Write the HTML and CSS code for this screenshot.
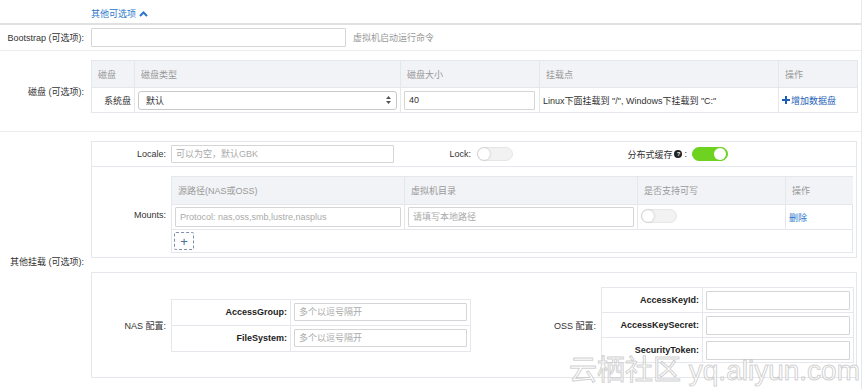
FILE: index.html
```html
<!DOCTYPE html>
<html lang="zh-CN">
<head>
    <title>其他可选项</title>
    <meta charset="UTF-8">
    <link rel="stylesheet" href="styles.css">
</head>
<body>
    <div class="page">
        <div class="toggle-row">
            <a class="more-link">其他可选项
                <svg class="chevron" width="9" height="6" viewBox="0 0 9 6"><path d="M1 5 L4.5 1.5 L8 5" fill="none" stroke="#2a76cc" stroke-width="2"/></svg>
            </a>
        </div>

        <div class="form-row row-bootstrap">
            <div class="row-label">Bootstrap (可选项):</div>
            <div class="row-body">
                <input type="text" class="text-input bootstrap-input">
                <span class="help">虚拟机启动运行命令</span>
            </div>
        </div>

        <div class="form-row row-disk">
            <div class="row-label">磁盘 (可选项):</div>
            <div class="row-body">
                <table class="grid disk-table">
                    <tr class="head">
                        <td class="c-disk">磁盘</td>
                        <td class="c-type">磁盘类型</td>
                        <td class="c-size">磁盘大小</td>
                        <td class="c-mount">挂载点</td>
                        <td class="c-op">操作</td>
                    </tr>
                    <tr>
                        <td class="c-disk disk-name">系统盘</td>
                        <td class="c-type">
                            <div class="select">默认
                                <svg class="sel-arrows" width="5" height="8" viewBox="0 0 5 8"><path d="M2.5 0 L5 3 L0 3 Z M2.5 8 L5 5 L0 5 Z" fill="#555"/></svg>
                            </div>
                        </td>
                        <td class="c-size"><input type="text" class="text-input size-input" value="40"></td>
                        <td class="c-mount mount-text">Linux下面挂载到 "/", Windows下挂载到 "C:"</td>
                        <td class="c-op">
                            <a class="add-link">
                                <svg width="8" height="8" viewBox="0 0 8 8"><rect x="3" y="0" width="2" height="8" fill="#1d5fb8"/><rect x="0" y="3" width="8" height="2" fill="#1d5fb8"/></svg>增加数据盘
                            </a>
                        </td>
                    </tr>
                </table>
            </div>
        </div>

        <div class="form-row row-mounts">
            <div class="row-label">其他挂载 (可选项):</div>
            <div class="row-body">
                <div class="panel">
                    <div class="sub-row locale-row">
                        <div class="sub-label">Locale:</div>
                        <input type="text" class="text-input locale-input" placeholder="可以为空，默认GBK">
                        <div class="lock-label">Lock:</div>
                        <span class="switch"></span>
                        <div class="cache-label">分布式缓存 <span class="q-icon">?</span>:</div>
                        <span class="switch on"></span>
                    </div>
                    <div class="sub-row mounts-row">
                        <div class="sub-label">Mounts:</div>
                        <div class="mounts-box">
                            <table class="grid mounts-table">
                                <tr class="head">
                                    <td class="m-src">源路径(NAS或OSS)</td>
                                    <td class="m-dir">虚拟机目录</td>
                                    <td class="m-rw">是否支持可写</td>
                                    <td class="m-op">操作</td>
                                </tr>
                                <tr>
                                    <td class="m-src"><input type="text" class="text-input cell-input" placeholder="Protocol: nas,oss,smb,lustre,nasplus"></td>
                                    <td class="m-dir"><input type="text" class="text-input cell-input" placeholder="请填写本地路径"></td>
                                    <td class="m-rw"><span class="switch"></span></td>
                                    <td class="m-op"><a class="del-link">删除</a></td>
                                </tr>
                            </table>
                            <div class="add-box">+</div>
                        </div>
                    </div>
                </div>

                <div class="panel config-panel">
                    <div class="config-group nas-group">
                        <div class="sub-label">NAS 配置:</div>
                        <table class="kv-table nas-table">
                            <tr>
                                <th>AccessGroup:</th>
                                <td><input type="text" class="text-input" placeholder="多个以逗号隔开"></td>
                            </tr>
                            <tr>
                                <th>FileSystem:</th>
                                <td><input type="text" class="text-input" placeholder="多个以逗号隔开"></td>
                            </tr>
                        </table>
                    </div>
                    <div class="config-group oss-group">
                        <div class="sub-label">OSS 配置:</div>
                        <table class="kv-table oss-table">
                            <tr>
                                <th>AccessKeyId:</th>
                                <td><input type="text" class="text-input"></td>
                            </tr>
                            <tr>
                                <th>AccessKeySecret:</th>
                                <td><input type="text" class="text-input"></td>
                            </tr>
                            <tr>
                                <th>SecurityToken:</th>
                                <td><input type="text" class="text-input"></td>
                            </tr>
                        </table>
                    </div>
                </div>
            </div>
        </div>

        <div class="watermark">云栖社区 yq.aliyun.com</div>
    </div>
</body>
</html>
```

FILE: styles.css
```css
body {
    margin: 0;
    background-color: white;
    font-family: "Liberation Sans", "Noto Sans CJK SC", sans-serif;
    font-size: 9px;
    color: #333;
}
.page {
    position: relative;
    width: 861px;
    min-height: 389px;
    border-right: 1px solid #e6e8ec;
}
.toggle-row {
    height: 23px;
    border-bottom: 2px solid #e0e0e0;
    padding-left: 91px;
    display: flex;
    align-items: center;
}
.more-link {
    color: #2a76cc;
    display: flex;
    align-items: center;
    gap: 3px;
    padding-top: 4px;
}
.form-row {
    display: flex;
    align-items: center;
    border-bottom: 1px solid #ececec;
}
.row-label {
    width: 84px;
    padding-right: 7px;
    text-align: right;
    flex-shrink: 0;
}
.row-body {
    flex: 1;
    padding-right: 4px;
}
.row-bootstrap {
    height: 25px;
}
.row-bootstrap .row-body {
    display: flex;
    align-items: center;
    gap: 7px;
}
.text-input {
    box-sizing: border-box;
    height: 19px;
    border: 1px solid #d5d5d5;
    border-radius: 1px;
    padding: 0 4px;
    font-family: inherit;
    font-size: 9px;
    color: #333;
    outline: none;
}
.text-input::placeholder {
    color: #aaa;
}
.bootstrap-input {
    width: 255px;
}
.help {
    color: #999;
}

/* tables */
.grid {
    border-collapse: collapse;
    table-layout: fixed;
}
.grid td {
    border: 1px solid #e4e7ec;
    padding: 0 3px;
    height: 23px;
    box-sizing: border-box;
}
.grid .head td {
    background-color: #f2f3f6;
    color: #999;
    height: 27px;
    padding-left: 6px;
}
.row-disk {
    height: 80px;
    align-items: flex-start;
}
.row-disk .row-label {
    align-self: center;
    padding-top: 1px;
}
.row-disk .row-body {
    padding-top: 9px;
}
.disk-table {
    width: 766px;
}
.disk-table td {
    height: 25px;
}
.c-disk { width: 43px; }
.c-type { width: 266px; }
.c-size { width: 139px; }
.c-mount { width: 239px; }
.c-op { width: 79px; }
.disk-name {
    text-align: right;
}
.select {
    box-sizing: border-box;
    height: 19px;
    border: 1px solid #c9c9c9;
    border-radius: 3px;
    display: flex;
    align-items: center;
    justify-content: space-between;
    padding: 0 5px 0 7px;
}
.size-input {
    width: 131px;
}
.mount-text {
    padding-left: 4px;
}
.add-link {
    color: #1d5fb8;
    display: flex;
    align-items: center;
    gap: 1px;
}

/* other mounts */
.row-mounts {
    align-items: center;
    border-bottom: none;
}
.row-mounts .row-body {
    padding-top: 9px;
    padding-bottom: 12px;
    display: flex;
    flex-direction: column;
    gap: 14px;
}
.panel {
    width: 766px;
    box-sizing: border-box;
    border: 1px solid #e4e7ec;
}
.sub-row {
    display: flex;
    align-items: center;
}
.sub-label {
    width: 74px;
    padding-right: 5px;
    text-align: right;
    flex-shrink: 0;
}
.locale-row {
    height: 24px;
    border-bottom: 1px solid #e4e7ec;
}
.locale-input {
    width: 223px;
    height: 18px;
}
.lock-label {
    width: 77px;
    text-align: right;
    margin-right: 6px;
}
.switch {
    position: relative;
    display: inline-block;
    width: 36px;
    height: 14px;
    border-radius: 7px;
    background-color: #f2f2f2;
    border: 1px solid #e6e6e6;
    box-sizing: border-box;
}
.switch::after {
    content: "";
    position: absolute;
    left: 0;
    top: 0;
    width: 12px;
    height: 12px;
    border-radius: 50%;
    background-color: white;
    box-shadow: 0 0 2px rgba(0,0,0,0.3);
}
.switch.on {
    background-color: #6dd320;
    border-color: #6dd320;
}
.switch.on::after {
    left: auto;
    right: 1px;
    box-shadow: none;
}
.cache-label {
    width: 174px;
    text-align: right;
    margin-right: 5px;
    display: flex;
    justify-content: flex-end;
    align-items: center;
    gap: 2px;
}
.q-icon {
    display: inline-flex;
    align-items: center;
    justify-content: center;
    width: 8px;
    height: 8px;
    border-radius: 50%;
    background-color: #222;
    color: white;
    font-size: 6px;
    font-weight: bold;
}
.mounts-row {
    align-items: center;
    padding: 9px 0 4px;
}
.mounts-box {
    width: 682px;
    box-sizing: border-box;
    border: 1px solid #e4e7ec;
    padding-bottom: 2px;
}
.mounts-table {
    margin: -1px 0 0 -1px;
    width: 681px;
}
.mounts-table td {
    height: 25px;
}
.mounts-table .head td {
    height: 28px;
}
.m-src { width: 233px; }
.m-dir { width: 233px; }
.m-rw { width: 148px; }
.m-op { width: 67px; border-right: none !important; }
.cell-input {
    width: 100%;
    height: 20px;
}
.del-link {
    color: #2a76cc;
}
.add-box {
    width: 20px;
    height: 18px;
    box-sizing: border-box;
    margin: 2px 0 0 2px;
    border: 1px dashed #7e90a6;
    border-radius: 2px;
    display: flex;
    align-items: center;
    justify-content: center;
    color: #4a6d96;
    font-size: 13px;
    line-height: 1;
}

/* NAS / OSS */
.config-panel {
    height: 106px;
    display: flex;
    align-items: center;
}
.config-group {
    display: flex;
    align-items: center;
}
.nas-group {
    width: 383px;
}
.oss-group .sub-label {
    width: 121px;
}
.kv-table {
    border-collapse: collapse;
    border: 1px solid #e4e7ec;
}
.kv-table th,
.kv-table td {
    border: 1px solid #e4e7ec;
    padding: 0 3px;
    box-sizing: border-box;
}
.kv-table th {
    text-align: right;
    font-weight: bold;
    color: #222;
}
.nas-table th {
    width: 119px;
    height: 26px;
}
.nas-table .text-input {
    width: 173px;
    height: 18px;
}
.oss-table th {
    width: 101px;
    height: 25px;
}
.oss-table .text-input {
    width: 144px;
    height: 19px;
}
.watermark {
    position: absolute;
    left: 569px;
    top: 348px;
    font-size: 28px;
    color: rgba(255,255,255,0.9);
    -webkit-text-stroke: 1px rgba(170,170,170,0.55);
    white-space: nowrap;
}
```
